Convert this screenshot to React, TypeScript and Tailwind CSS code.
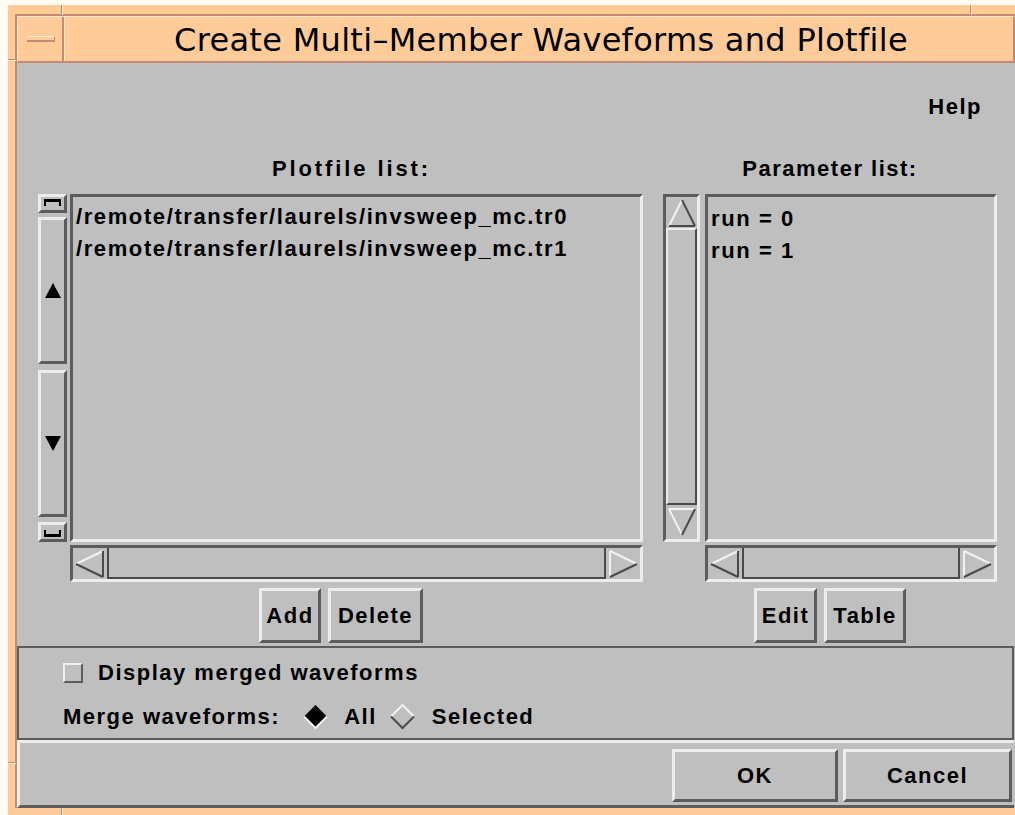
import React from 'react';

// 3-D edges of the old X toolkit: light on the lit side, dark on the shaded side
const raised = 'border-[3px] border-t-[#ececec] border-l-[#ececec] border-r-[#5c5c5c] border-b-[#5c5c5c]';
const sunken = 'border-[3px] border-t-[#5c5c5c] border-l-[#5c5c5c] border-r-[#ececec] border-b-[#ececec]';
const label = "font-['Liberation_Sans',Arial,sans-serif] text-[22px] font-bold leading-[22px] tracking-[1.5px] text-black whitespace-nowrap";

const LIGHT = '#f2f2f2';
const DARK = '#4a4a4a';

const plotfiles = ['/remote/transfer/laurels/invsweep_mc.tr0', '/remote/transfer/laurels/invsweep_mc.tr1'];
const params = ['run = 0', 'run = 1'];

const FilledArrow = ({ up }: { up: boolean }) => (
  <svg width="16" height="15" viewBox="0 0 16 15">
    {up ? <polygon points="8,0 16,15 0,15" fill="#000" /> : <polygon points="0,0 16,0 8,15" fill="#000" />}
  </svg>
);

const Cap = ({ top }: { top: boolean }) => (
  <svg width="17" height="8" viewBox="0 0 17 8">
    {top ? (
      <>
        <rect x="0" y="0" width="17" height="3" fill="#000" />
        <rect x="0" y="0" width="2" height="7" fill="#000" />
        <rect x="15" y="0" width="2" height="7" fill="#000" />
      </>
    ) : (
      <>
        <rect x="0" y="5" width="17" height="3" fill="#000" />
        <rect x="0" y="1" width="2" height="7" fill="#000" />
        <rect x="15" y="1" width="2" height="7" fill="#000" />
      </>
    )}
  </svg>
);

// hollow triangles with light and dark edges
const Hollow = ({ dir }: { dir: 'up' | 'down' | 'left' | 'right' }) => {
  const common = { strokeWidth: 2, fill: 'none' };
  if (dir === 'up')
    return (
      <svg width="28" height="28" viewBox="0 0 28 28">
        <line x1="14" y1="1" x2="1" y2="27" stroke={LIGHT} {...common} />
        <line x1="14" y1="1" x2="27" y2="27" stroke={DARK} {...common} />
        <line x1="1" y1="27" x2="27" y2="27" stroke={DARK} {...common} />
      </svg>
    );
  if (dir === 'down')
    return (
      <svg width="28" height="28" viewBox="0 0 28 28">
        <line x1="1" y1="1" x2="27" y2="1" stroke={LIGHT} {...common} />
        <line x1="1" y1="1" x2="14" y2="27" stroke={LIGHT} {...common} />
        <line x1="27" y1="1" x2="14" y2="27" stroke={DARK} {...common} />
      </svg>
    );
  if (dir === 'left')
    return (
      <svg width="30" height="28" viewBox="0 0 30 28">
        <line x1="1" y1="14" x2="28" y2="1" stroke={LIGHT} {...common} />
        <line x1="28" y1="1" x2="28" y2="27" stroke={DARK} {...common} />
        <line x1="1" y1="14" x2="28" y2="27" stroke={DARK} {...common} />
      </svg>
    );
  return (
    <svg width="30" height="28" viewBox="0 0 30 28">
      <line x1="2" y1="1" x2="2" y2="27" stroke={LIGHT} {...common} />
      <line x1="2" y1="1" x2="29" y2="14" stroke={LIGHT} {...common} />
      <line x1="2" y1="27" x2="29" y2="14" stroke={DARK} {...common} />
    </svg>
  );
};

// scrollbar with anchors and a split elevator
const AnchorScrollbar = () => (
  <div className="flex w-[29px] flex-col">
    <div className={`${raised} flex h-[19px] items-start justify-center pt-[2px]`}>
      <Cap top />
    </div>
    <div className={`${raised} mt-[4px] flex h-[147px] items-center justify-center`}>
      <FilledArrow up />
    </div>
    <div className={`${raised} mt-[6px] flex h-[147px] items-center justify-center`}>
      <FilledArrow up={false} />
    </div>
    <div className={`${raised} mt-[5px] flex h-[20px] items-end justify-center pb-[2px]`}>
      <Cap top={false} />
    </div>
  </div>
);

const VScroll = () => (
  <div className={`${sunken} flex w-[37px] flex-col`}>
    <div className="flex h-[31px] items-center justify-center">
      <Hollow dir="up" />
    </div>
    <div className="flex-1 border-[2px] border-t-[#ececec] border-l-[#ececec] border-r-[#4a4a4a] border-b-[#4a4a4a]" />
    <div className="flex h-[34px] items-center justify-center">
      <Hollow dir="down" />
    </div>
  </div>
);

const HScroll = () => (
  <div className={`${sunken} flex h-[37px]`}>
    <div className="flex w-[34px] items-center justify-center">
      <Hollow dir="left" />
    </div>
    <div className="flex-1 border-[2px] border-t-0 border-l-[#4a4a4a] border-r-[#4a4a4a] border-b-[#4a4a4a]" />
    <div className="flex w-[34px] items-center justify-center">
      <Hollow dir="right" />
    </div>
  </div>
);

const List = ({ items, className }: { items: string[]; className: string }) => (
  <div className={`${sunken} ${className} flex flex-col pl-[3px]`}>
    {items.map((t) => (
      <div key={t} className={`${label} h-[32px] tracking-[1.6px]`}>
        {t}
      </div>
    ))}
  </div>
);

const Button = ({ text, w, h = 'h-[55px]' }: { text: string; w: string; h?: string }) => (
  <div className={`${raised} ${w} ${h} flex items-center justify-center`}>
    <span className={label}>{text}</span>
  </div>
);

const Diamond = ({ filled }: { filled: boolean }) => (
  <svg width="27" height="27" viewBox="0 0 27 27">
    {filled ? (
      <>
        <polygon points="13.5,2 25,13.5 13.5,25 2,13.5" fill="#000" />
        <polyline points="2,13.5 13.5,25 25,13.5" stroke={LIGHT} strokeWidth="2" fill="none" />
      </>
    ) : (
      <>
        <polyline points="2,13.5 13.5,2 25,13.5" stroke={LIGHT} strokeWidth="2" fill="none" />
        <polyline points="2,13.5 13.5,25 25,13.5" stroke={DARK} strokeWidth="2" fill="none" />
      </>
    )}
  </svg>
);

export default function App() {
  return (
    <div className="relative h-[815px] w-[1015px] overflow-hidden bg-[#fffaf2]">
      <div className="ml-[8px] mt-[5px] flex h-[810px] w-[1007px] flex-col bg-[#ffcc99] pb-[7px] pl-[7px] pt-[9px]">
        <div className="flex flex-1 flex-col border-l-2 border-t-2 border-[#c48a72]">
          {/* title bar */}
          <div className="flex h-[47px] border-b-2 border-l border-r-2 border-t border-b-[#c48a72] border-l-[#ffe6c8] border-r-[#c48a72] border-t-[#ffe6c8]">
            <div className="flex w-[46px] items-start border-r-2 border-r-[#c48a72] pl-[9px] pt-[19px]">
              <div className="h-[6px] w-[28px] border-b-2 border-r border-t border-b-[#c48a72] border-r-[#c48a72] border-t-[#fff0dc]" />
            </div>
            <div className="flex flex-1 items-center justify-center border-l border-l-[#ffe6c8] pl-[4px] pt-[1px]">
              <span className="font-['DejaVu_Sans',sans-serif] text-[32px] leading-none tracking-[0.3px] text-black">
                Create Multi–Member Waveforms and Plotfile
              </span>
            </div>
          </div>

          {/* dialog body */}
          <div className="flex flex-1 flex-col bg-[#bfbfbf] pr-[1px]">
            <div className="flex flex-col pl-[21px] pr-[17px]">
              <div className="flex justify-end pr-[15px] pt-[33px]">
                <span className={label}>Help</span>
              </div>
              <div className="mt-[40px] flex gap-[20px]">
                {/* plotfiles */}
                <div className="flex w-[605px] flex-col">
                  <div className="flex h-[22px] justify-center pl-[22px]">
                    <span className={`${label} tracking-[2.9px]`}>Plotfile list:</span>
                  </div>
                  <div className="mt-[14px] flex h-[348px] gap-[3px]">
                    <AnchorScrollbar />
                    <List items={plotfiles} className="flex-1 pt-[9px]" />
                  </div>
                  <div className="ml-[32px] mt-[3px]">
                    <HScroll />
                  </div>
                  <div className="mt-[6px] flex justify-center gap-[7px] pl-[1px]">
                    <Button text="Add" w="w-[62px]" />
                    <Button text="Delete" w="w-[95px]" />
                  </div>
                </div>
                {/* parameters */}
                <div className="flex w-[334px] flex-col">
                  <div className="flex h-[22px] justify-center">
                    <span className={label}>Parameter list:</span>
                  </div>
                  <div className="mt-[14px] flex h-[348px] gap-[5px]">
                    <VScroll />
                    <List items={params} className="flex-1 pt-[11px]" />
                  </div>
                  <div className="ml-[42px] mt-[3px]">
                    <HScroll />
                  </div>
                  <div className="mt-[6px] flex justify-center gap-[7px]">
                    <Button text="Edit" w="w-[63px]" />
                    <Button text="Table" w="w-[82px]" />
                  </div>
                </div>
              </div>
            </div>

            {/* merge options */}
            <div className="mt-[3px] flex h-[94px] flex-col border-[2px] border-[#5c5c5c] pl-[44px]">
              <div className="mt-[15px] flex h-[20px] items-center">
                <div className="h-[20px] w-[20px] border-[2px] border-t-[#ececec] border-l-[#ececec] border-r-[#5c5c5c] border-b-[#5c5c5c]" />
                <span className={`${label} ml-[15px]`}>Display merged waveforms</span>
              </div>
              <div className="mt-[20px] flex h-[27px] items-center">
                <span className={label}>Merge waveforms:</span>
                <div className="ml-[22px]">
                  <Diamond filled />
                </div>
                <span className={`${label} ml-[15px]`}>All</span>
                <div className="ml-[12px]">
                  <Diamond filled={false} />
                </div>
                <span className={`${label} ml-[16px]`}>Selected</span>
              </div>
            </div>

            {/* dialog actions */}
            <div className="flex flex-1 justify-end gap-[5px] border-b-[3px] border-l-[3px] border-t-[3px] border-b-[#5c5c5c] border-l-[#ececec] border-t-[#ececec] pr-[2px] pt-[6px]">
              <Button text="OK" w="w-[166px]" h="h-[53px]" />
              <Button text="Cancel" w="w-[169px]" h="h-[53px]" />
            </div>
          </div>
        </div>
      </div>

      {/* resize corner marks on the frame */}
      <span className="absolute left-[61px] top-[5px] h-[10px] w-[2px] border-l border-r border-l-[#c48a72] border-r-[#fff0dc]" />
      <span className="absolute left-[970px] top-[5px] h-[10px] w-[2px] border-l border-r border-l-[#c48a72] border-r-[#fff0dc]" />
      <span className="absolute left-[8px] top-[59px] h-[2px] w-[8px] border-b border-t border-b-[#fff0dc] border-t-[#c48a72]" />
      <span className="absolute left-[8px] top-[762px] h-[2px] w-[8px] border-b border-t border-b-[#fff0dc] border-t-[#c48a72]" />
      <span className="absolute left-[61px] top-[808px] h-[7px] w-[2px] border-l border-r border-l-[#c48a72] border-r-[#fff0dc]" />
    </div>
  );
}
